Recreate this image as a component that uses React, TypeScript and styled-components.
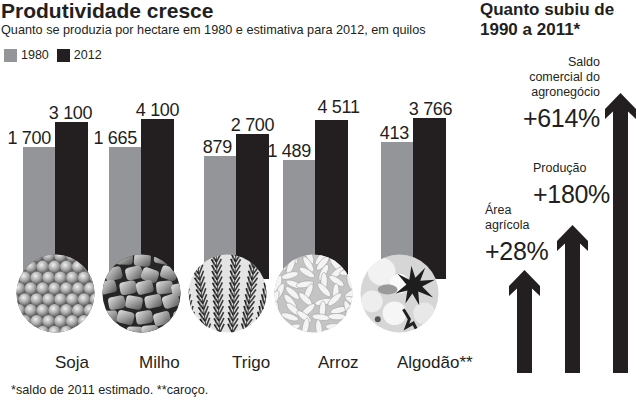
import * as React from 'react'
import styled, { createGlobalStyle } from 'styled-components'

const GlobalStyle = createGlobalStyle`
  html, body {
    margin: 0;
    padding: 0;
    background: #ffffff;
  }
`

const INK = '#231f20'
const GREY = '#939598'

const Page = styled.div`
  display: flex;
  width: 636px;
  height: 400px;
  overflow: hidden;
  background: #ffffff;
  color: ${INK};
  font-family: 'Liberation Sans', Arial, sans-serif;
`

const Left = styled.div`
  width: 478px;
  box-sizing: border-box;
  display: flex;
  flex-direction: column;
  padding: 0 0 3px 1px;
`

const Title = styled.h1`
  margin: 0;
  font-size: 21px;
  line-height: 22px;
  font-weight: 700;
`

const Subtitle = styled.p`
  margin: 1px 0 0;
  font-size: 12.7px;
  line-height: 14px;
`

const Legend = styled.div`
  display: flex;
  align-items: center;
  gap: 4px;
  margin: 12px 0 0 3px;
  font-size: 12.5px;
  line-height: 13px;
`

const Swatch = styled.span<{ $dark?: boolean }>`
  width: 13px;
  height: 13px;
  background: ${p => (p.$dark ? INK : GREY)};
`

const LegendText = styled.span`
  margin-right: 4px;
`

const Chart = styled.div`
  flex: 1;
  display: flex;
  align-items: flex-end;
  gap: 7px;
  padding-left: 15px;
`

const CropCol = styled.div`
  width: 79px;
  display: flex;
  flex-direction: column;
  align-items: flex-start;
`

const BarPair = styled.div<{ $offset: number }>`
  display: flex;
  align-items: flex-end;
  margin-left: ${p => p.$offset}px;
`

const BarStack = styled.div<{ $dark?: boolean }>`
  width: ${p => (p.$dark ? 33 : 32)}px;
  display: flex;
  flex-direction: column;
  align-items: ${p => (p.$dark ? 'center' : 'flex-end')};
`

const BarValue = styled.span<{ $lift: number; $dark?: boolean; $shift: number }>`
  font-size: 18px;
  line-height: 18px;
  letter-spacing: -0.3px;
  white-space: nowrap;
  margin-bottom: ${p => p.$lift}px;
  margin-right: ${p => (p.$dark ? 0 : 4)}px;
  transform: translateX(${p => p.$shift}px);
`

const Bar = styled.div<{ $dark?: boolean }>`
  align-self: stretch;
  background: ${p => (p.$dark ? INK : GREY)};
`

const Photo = styled.svg`
  display: block;
  position: relative;
  width: 79px;
  height: 79px;
  margin-top: -25px;
`

const CropName = styled.div<{ $offset: number }>`
  margin: 20px 0 0 ${p => p.$offset}px;
  font-size: 17px;
  line-height: 20px;
  white-space: nowrap;
`

const Footnote = styled.div`
  margin: 10px 0 0 10px;
  font-size: 12.7px;
  line-height: 14px;
`

const Right = styled.div`
  flex: 1;
  display: flex;
  flex-direction: column;
  padding-bottom: 27px;
`

const Heading = styled.h2`
  margin: 0 0 0 2px;
  font-size: 17px;
  line-height: 20px;
  font-weight: 700;
`

const Steps = styled.div`
  margin-top: auto;
  display: flex;
  align-items: flex-end;
  gap: 17px;
  padding-left: 31px;
`

const Step = styled.div<{ $right?: boolean }>`
  width: 31px;
  display: flex;
  flex-direction: column;
  align-items: ${p => (p.$right ? 'flex-end' : 'flex-start')};
`

const StepText = styled.div<{ $right?: boolean }>`
  display: flex;
  flex-direction: column;
  align-items: ${p => (p.$right ? 'flex-end' : 'flex-start')};
  margin: ${p => (p.$right ? '0 36px 0 0' : '0 0 0 -24px')};
  white-space: nowrap;
`

const StepLabel = styled.div<{ $right?: boolean }>`
  font-size: 12.5px;
  line-height: 15px;
  text-align: ${p => (p.$right ? 'right' : 'left')};
`

const StepValue = styled.div`
  margin-top: 5px;
  font-size: 25px;
  line-height: 26px;
  letter-spacing: -0.3px;
`

const Arrow = styled.svg<{ $gap: number }>`
  display: block;
  margin-top: ${p => p.$gap}px;
`

const rnd = (seed: number) => {
  let s = seed
  return () => {
    s = (s * 9301 + 49297) % 233280
    return s / 233280
  }
}

const Soy = () => {
  const beans: [number, number][] = []
  for (let r = 0; r < 8; r++)
    for (let c = 0; c < 8; c++) beans.push([c * 12 + (r % 2) * 6 - 3, r * 11 + 2])
  return (
    <>
      <defs>
        <radialGradient id="soyG" cx="0.4" cy="0.35" r="0.65">
          <stop offset="0" stopColor="#f0f0f0" />
          <stop offset="0.6" stopColor="#a8a8a8" />
          <stop offset="1" stopColor="#666" />
        </radialGradient>
      </defs>
      <rect width="80" height="80" fill="#5c5c5c" />
      {beans.map(([x, y], i) => (
        <circle key={i} cx={x} cy={y} r="6.3" fill="url(#soyG)" />
      ))}
    </>
  )
}

const Corn = () => {
  const r = rnd(7)
  const kernels: [number, number, number][] = []
  for (let row = 0; row < 6; row++)
    for (let c = 0; c < 5; c++)
      kernels.push([c * 19 - 6 + r() * 5 + (row % 2) * 8, row * 15 - 4 + r() * 4, r() * 40 - 20])
  return (
    <>
      <defs>
        <linearGradient id="cornG" x1="0" y1="0" x2="1" y2="1">
          <stop offset="0" stopColor="#e2e2e2" />
          <stop offset="0.5" stopColor="#a0a0a0" />
          <stop offset="1" stopColor="#555" />
        </linearGradient>
      </defs>
      <rect width="80" height="80" fill="#262626" />
      {kernels.map(([x, y, a], i) => (
        <rect
          key={i}
          x={x}
          y={y}
          width="17"
          height="13"
          rx="4"
          fill="url(#cornG)"
          transform={`rotate(${a} ${x + 8} ${y + 6})`}
        />
      ))}
    </>
  )
}

const Wheat = () => {
  const ears = [6, 19, 32, 45, 58, 71]
  return (
    <>
      <rect width="80" height="80" fill="#e4e4e4" />
      {ears.map((x0, e) => (
        <g key={e} transform={`rotate(${(e - 2.5) * 5} ${x0} 80)`}>
          <line x1={x0} y1="0" x2={x0} y2="80" stroke="#444" strokeWidth="1" />
          {Array.from({ length: 14 }).map((_, k) => {
            const y = 80 - k * 6
            return (
              <g key={k}>
                <path d={`M${x0} ${y} L${x0 - 5} ${y - 9}`} stroke="#1c1c1c" strokeWidth="1.6" />
                <path d={`M${x0} ${y} L${x0 + 5} ${y - 9}`} stroke="#3a3a3a" strokeWidth="1.6" />
                <path d={`M${x0 - 2} ${y - 2} L${x0 - 4} ${y - 14}`} stroke="#777" strokeWidth="0.6" />
              </g>
            )
          })}
        </g>
      ))}
    </>
  )
}

const Rice = () => {
  const r = rnd(3)
  const grains: [number, number, number][] = []
  for (let row = 0; row < 9; row++)
    for (let c = 0; c < 6; c++) grains.push([c * 15 + r() * 6, row * 9 + r() * 4, r() * 180])
  return (
    <>
      <rect width="80" height="80" fill="#c4c4c4" />
      {grains.map(([x, y, a], i) => (
        <ellipse
          key={i}
          cx={x}
          cy={y}
          rx="9"
          ry="3.2"
          fill="#f4f4f4"
          stroke="#a4a4a4"
          strokeWidth="0.6"
          transform={`rotate(${a} ${x} ${y})`}
        />
      ))}
    </>
  )
}

const Cotton = () => (
  <>
    <rect width="80" height="80" fill="#d6d6d6" />
    <circle cx="22" cy="18" r="14" fill="#f2f2f2" />
    <circle cx="12" cy="48" r="11" fill="#eeeeee" />
    <circle cx="35" cy="60" r="12" fill="#f6f6f6" />
    <circle cx="65" cy="60" r="11" fill="#e8e8e8" />
    <circle cx="40" cy="30" r="10" fill="#fafafa" />
    <ellipse cx="28" cy="36" rx="10" ry="5" fill="#9a9a9a" />
    <polygon
      points="52,12 56,24 66,14 61,27 76,26 63,33 74,44 59,38 60,52 53,40 46,50 48,37 36,40 47,31 38,20 50,26"
      fill="#1e1e1e"
    />
    <path d="M44 56 L50 66 L47 74 L54 70 L58 78" stroke="#222" strokeWidth="3" fill="none" />
    <circle cx="18" cy="66" r="3" fill="#555" />
  </>
)

type Crop = {
  name: string
  old: string
  now: string
  oldH: number
  nowH: number
  bars: number
  label: number
  lift: number
  shift: number
  Photo: () => React.ReactElement
}

const crops: Crop[] = [
  { name: 'Soja', old: '1 700', now: '3 100', oldH: 132, nowH: 157, bars: 7, label: 39, lift: 0, shift: -1, Photo: Soy },
  { name: 'Milho', old: '1 665', now: '4 100', oldH: 132, nowH: 160, bars: 7, label: 37, lift: 0, shift: 0, Photo: Corn },
  { name: 'Trigo', old: '879', now: '2 700', oldH: 123, nowH: 145, bars: 16, label: 44, lift: 0, shift: 0, Photo: Wheat },
  { name: 'Arroz', old: '1 489', now: '4 511', oldH: 119, nowH: 159, bars: 9, label: 44, lift: 4, shift: 7, Photo: Rice },
  { name: 'Algodão**', old: '413', now: '3 766', oldH: 137, nowH: 161, bars: 21, label: 37, lift: 0, shift: 1, Photo: Cotton },
]

const ArrowIcon = ({ height, gap }: { height: number; gap: number }) => (
  <Arrow $gap={gap} width="31" height={height} viewBox={`0 0 31 ${height}`}>
    <polygon
      points={`15.5,0 31,16 31,26 23,18.5 23,${height} 8,${height} 8,18.5 0,26 0,16`}
      fill={INK}
    />
  </Arrow>
)

export default function App() {
  return (
    <>
      <GlobalStyle />
      <Page>
        <Left>
          <Title>Produtividade cresce</Title>
          <Subtitle>Quanto se produzia por hectare em 1980 e estimativa para 2012, em quilos</Subtitle>
          <Legend>
            <Swatch />
            <LegendText>1980</LegendText>
            <Swatch $dark />
            <LegendText>2012</LegendText>
          </Legend>
          <Chart>
            {crops.map(c => (
              <CropCol key={c.name}>
                <BarPair $offset={c.bars}>
                  <BarStack>
                    <BarValue $lift={0} $shift={0}>{c.old}</BarValue>
                    <Bar style={{ height: c.oldH }} />
                  </BarStack>
                  <BarStack $dark>
                    <BarValue $dark $lift={c.lift} $shift={c.shift}>{c.now}</BarValue>
                    <Bar $dark style={{ height: c.nowH }} />
                  </BarStack>
                </BarPair>
                <Photo viewBox="0 0 80 80">
                  <defs>
                    <clipPath id={`clip-${c.name}`}>
                      <circle cx="40" cy="40" r="39.5" />
                    </clipPath>
                  </defs>
                  <g clipPath={`url(#clip-${c.name})`}>
                    <c.Photo />
                  </g>
                </Photo>
                <CropName $offset={c.label}>{c.name}</CropName>
              </CropCol>
            ))}
          </Chart>
          <Footnote>*saldo de 2011 estimado. **caroço.</Footnote>
        </Left>
        <Right>
          <Heading>
            Quanto subiu de
            <br />
            1990 a 2011*
          </Heading>
          <Steps>
            <Step>
              <StepText>
                <StepLabel>Área</StepLabel>
                <StepLabel>agrícola</StepLabel>
                <StepValue>+28%</StepValue>
              </StepText>
              <ArrowIcon height={103} gap={6} />
            </Step>
            <Step>
              <StepText>
                <StepLabel>Produção</StepLabel>
                <StepValue>+180%</StepValue>
              </StepText>
              <ArrowIcon height={148} gap={18} />
            </Step>
            <Step $right>
              <StepText $right>
                <StepLabel $right>Saldo</StepLabel>
                <StepLabel $right>comercial do</StepLabel>
                <StepLabel $right>agronegócio</StepLabel>
                <StepValue>+614%</StepValue>
              </StepText>
              <ArrowIcon height={280} gap={-38} />
            </Step>
          </Steps>
        </Right>
      </Page>
    </>
  )
}
